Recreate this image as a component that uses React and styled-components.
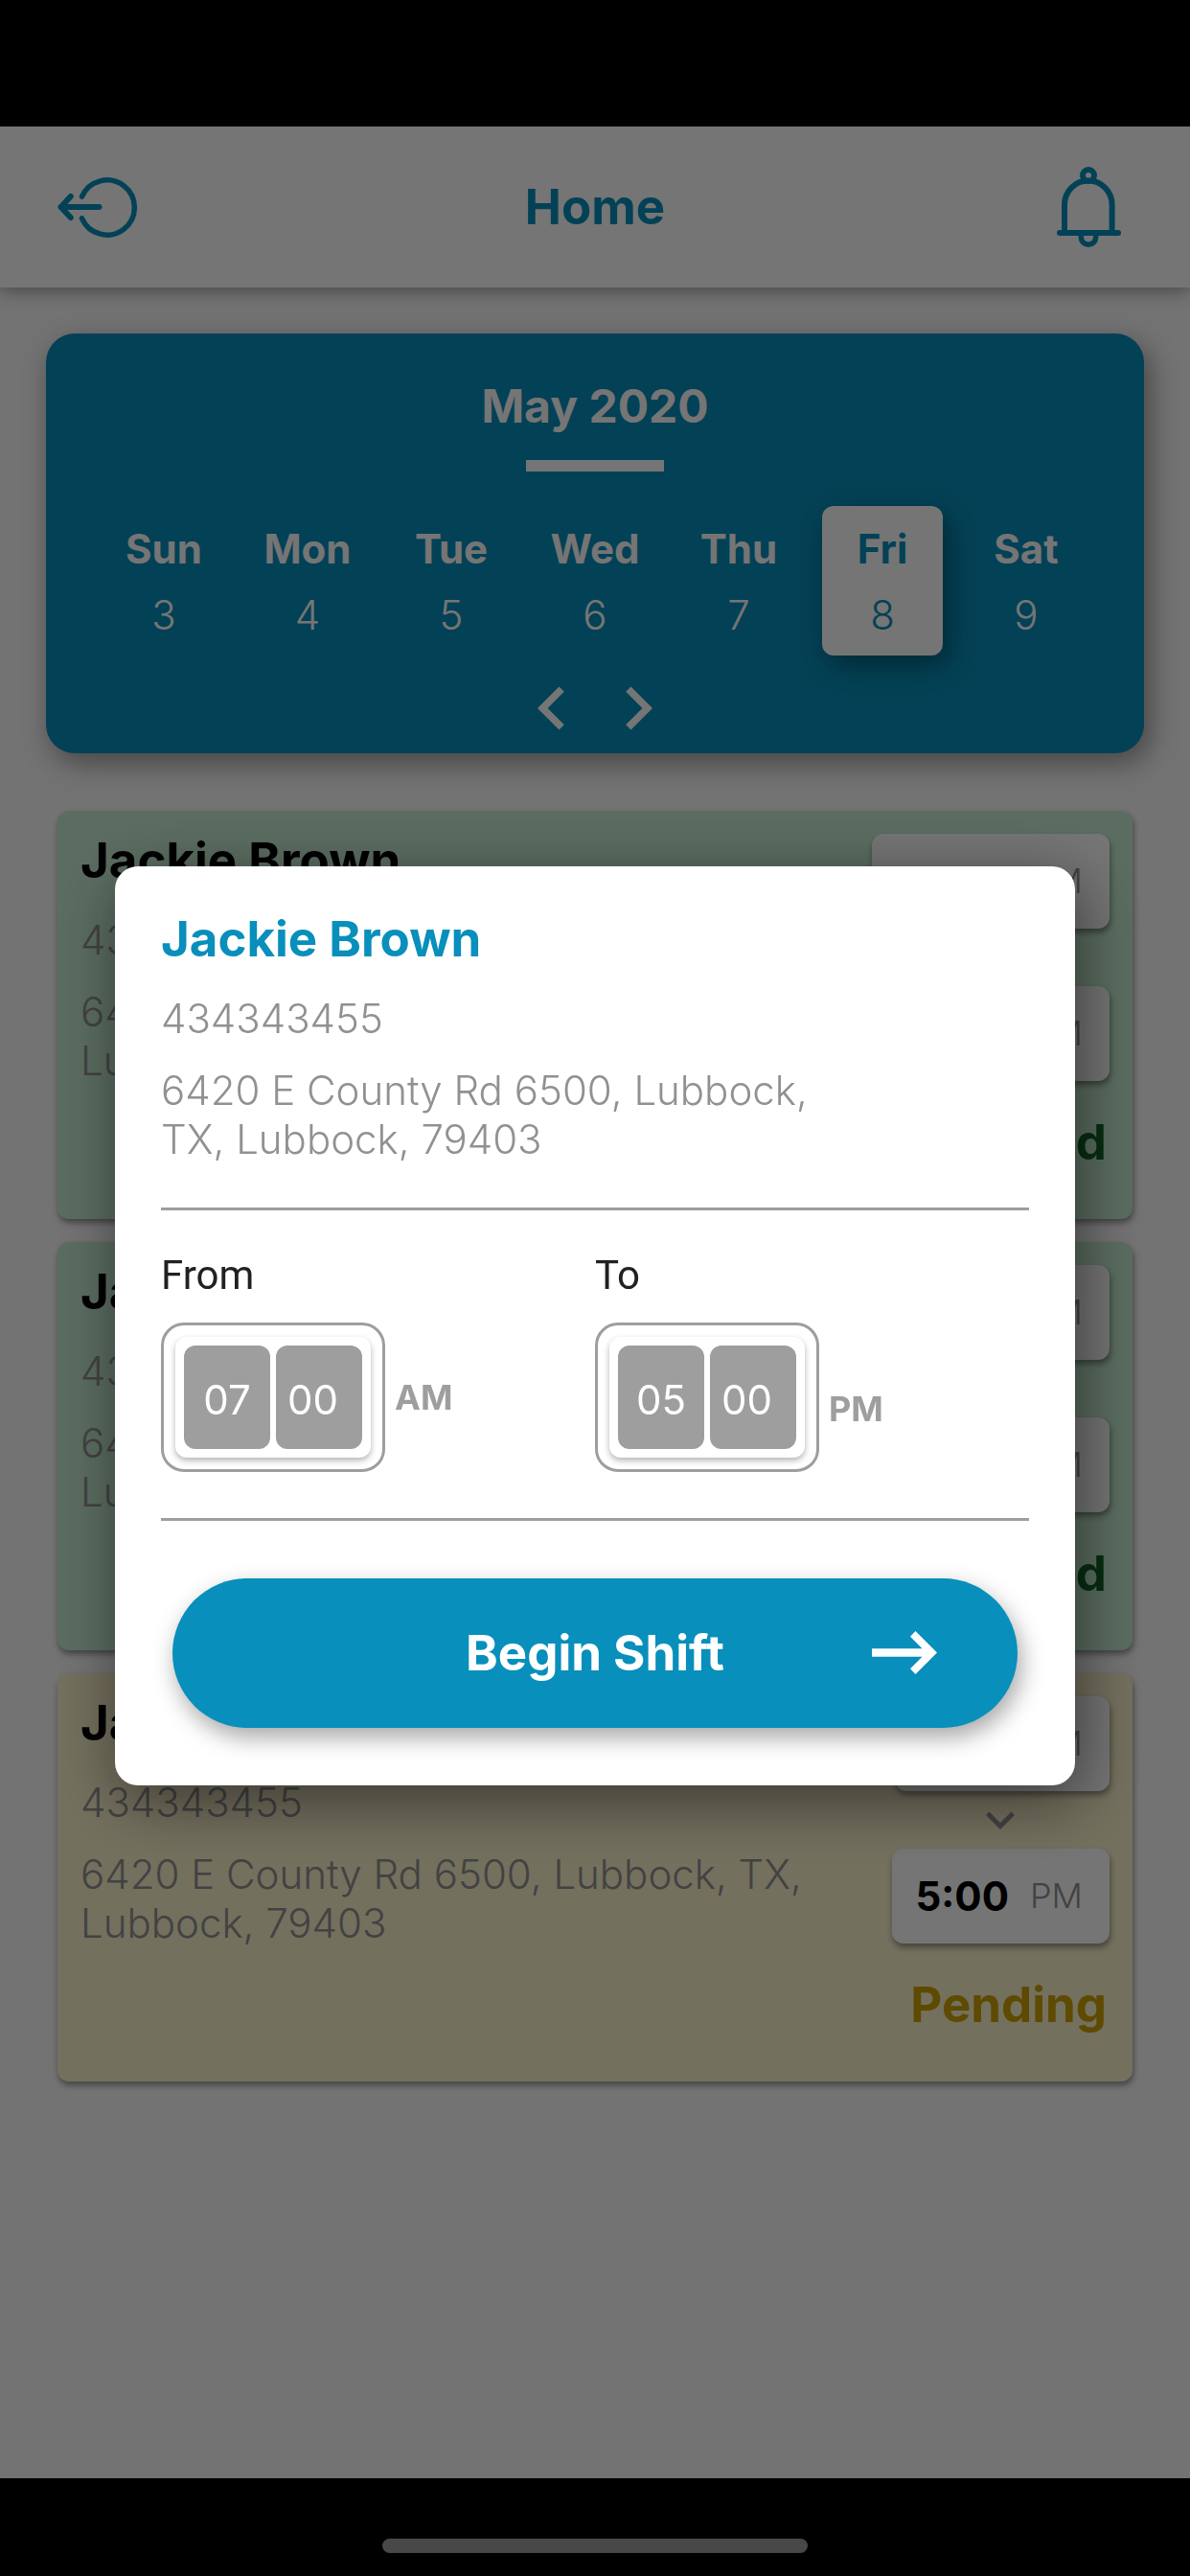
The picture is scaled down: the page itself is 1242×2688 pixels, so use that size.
import React from "react";
import styled, { createGlobalStyle } from "styled-components";
import { MdKeyboardArrowDown, MdKeyboardArrowLeft, MdKeyboardArrowRight } from "react-icons/md";

const blue = "#088fbb";
const grey = "#9e9e9e";

const GlobalStyle = createGlobalStyle`
    * {
        box-sizing: border-box;
    }

    body {
        margin: 0;
        background: #000;
        font-family: Inter, sans-serif;
        font-size: 42px;
        line-height: 51px;
    }

    h1, h2, h3, p {
        margin: 0;
    }

    button {
        border: none;
        background: none;
        padding: 0;
        font: inherit;
        color: inherit;
        cursor: pointer;
    }
`;

const Screen = styled.div`
    min-height: 100vh;
    display: flex;
    flex-direction: column;
`;

const StatusBar = styled.div`
    height: 132px;
    background: #000;
`;

const Header = styled.header`
    position: relative;
    height: 168px;
    padding: 0 60px;
    display: grid;
    grid-template-columns: 1fr auto 1fr;
    align-items: center;
    background: #fff;
    color: ${blue};
    box-shadow: 0 3px 18px rgba(0, 0, 0, 0.4);
`;

const HeaderTitle = styled.h1`
    font-size: 51px;
    line-height: 56px;
    font-weight: 700;
`;

const IconButton = styled.button`
    display: flex;
    justify-self: ${(props) => (props.$end ? "end" : "start")};
    padding: ${(props) => (props.$end ? "0 12px" : "0")};
`;

const Main = styled.main`
    flex: 1;
    padding: 48px;
    background: #fafafa;
`;

const Calendar = styled.section`
    padding: 48px 48px 2px;
    display: flex;
    flex-direction: column;
    align-items: center;
    border-radius: 30px;
    background: ${blue};
    color: #fff;
    box-shadow: 6px 10px 30px rgba(0, 0, 0, 0.4);
`;

const Month = styled.h2`
    font-size: 48px;
    line-height: 56px;
    font-weight: 700;
`;

const MonthBar = styled.div`
    width: 144px;
    height: 12px;
    margin: 28px 0 36px;
    background: #fff;
`;

const Days = styled.div`
    width: 100%;
    display: grid;
    grid-template-columns: repeat(7, 1fr);
    column-gap: 24px;
    padding: 0 12px;
`;

const Day = styled.button`
    && {
        padding: 21px 0 18px;
        display: flex;
        flex-direction: column;
        align-items: center;
        gap: 21px;
        line-height: 48px;
        border-radius: 12px;
        color: ${(props) => (props.$selected ? blue : "#fff")};
        background: ${(props) => (props.$selected ? "#fff" : "transparent")};
        box-shadow: ${(props) => (props.$selected ? "6px 10px 30px rgba(0, 0, 0, 0.4)" : "none")};
    }
`;

const DayName = styled.span`
    font-weight: 700;
`;

const DayNumber = styled.span`
    font-weight: 300;
`;

const Pager = styled.div`
    display: flex;
    margin-top: 10px;
`;

const PagerButton = styled.button`
    display: flex;
    font-size: 90px;
`;

const ShiftList = styled.div`
    padding: 0 12px;
    margin-top: 60px;
    display: flex;
    flex-direction: column;
    gap: 24px;
`;

const Shift = styled.article`
    min-height: 426px;
    padding: 24px;
    display: flex;
    justify-content: space-between;
    border-radius: 12px;
    background: ${(props) => (props.$pending ? "#fbf3cd" : "#c6edd1")};
    box-shadow: 1px 4px 6px rgba(0, 0, 0, 0.4);
`;

const ShiftInfo = styled.div`
    width: 798px;
    flex-shrink: 0;
    color: #919191;
    font-weight: 300;
`;

const Name = styled.h3`
    font-size: 51px;
    line-height: 56px;
    font-weight: 700;
    color: ${(props) => (props.$accent ? blue : "#000")};
`;

const Phone = styled.p`
    margin: 29px 0 24px;
`;

const ShiftTimes = styled.div`
    display: flex;
    flex-direction: column;
    align-items: flex-end;
`;

const TimeChip = styled.div`
    height: 99px;
    padding: 0 28px 0 24px;
    display: flex;
    align-items: center;
    gap: 22px;
    border-radius: 12px;
    background: #fff;
    color: #000;
    white-space: nowrap;
    box-shadow: 1px 4px 6px rgba(0, 0, 0, 0.4);
`;

const Clock = styled.span`
    font-weight: 700;
`;

const ChipMeridiem = styled.span`
    font-size: 36px;
    font-weight: 300;
    color: #919191;
`;

const ChevronBox = styled.div`
    width: 228px;
    height: 60px;
    display: flex;
    justify-content: center;
    font-size: 60px;
    color: #919191;
`;

const Status = styled.p`
    padding: 36px 3px 0 0;
    font-size: 51px;
    line-height: 56px;
    font-weight: 700;
    color: ${(props) => (props.$pending ? "#cca100" : "#116427")};
`;

const BottomBar = styled.footer`
    height: 102px;
    padding-bottom: 24px;
    display: flex;
    align-items: flex-end;
    justify-content: center;
    background: #000;
`;

const HomeIndicator = styled.div`
    width: 444px;
    height: 15px;
    border-radius: 8px;
    background: #9d9d9d;
`;

const Overlay = styled.div`
    position: fixed;
    inset: 0;
    padding: 132px 120px 54px;
    display: flex;
    align-items: center;
    background: rgba(0, 0, 0, 0.54);
`;

const Dialog = styled.div`
    width: 100%;
    padding: 48px 48px 60px;
    border-radius: 24px;
    background: #fff;
    color: #919191;
    font-weight: 300;
    box-shadow: 6px 16px 66px rgba(0, 0, 0, 0.5);
`;

const DialogAddress = styled.p`
    max-width: 720px;
`;

const Times = styled.div`
    margin: 46px 0 60px;
    padding: 42px 0 48px;
    display: grid;
    grid-template-columns: 1fr 1fr;
    border: solid ${grey};
    border-width: 3px 0;
`;

const FieldLabel = styled.p`
    margin-bottom: 24px;
    font-family: Roboto, sans-serif;
    font-weight: 400;
    color: #212121;
`;

const TimeField = styled.div`
    display: flex;
    align-items: center;
    gap: 10px;
`;

const TimeFrame = styled.div`
    padding: 12px;
    border: 3px solid ${grey};
    border-radius: 24px;
`;

const TimeInner = styled.div`
    padding: 9px;
    display: flex;
    gap: 6px;
    border-radius: 12px;
    box-shadow: 0 3px 6px rgba(0, 0, 0, 0.3);
`;

const TimeInput = styled.input`
    width: 90px;
    height: 108px;
    padding: ${(props) => (props.$minutes ? "6px 0 0 12px" : "6px 0 0")};
    border: none;
    border-radius: 12px;
    background: ${grey};
    color: #fff;
    font-family: inherit;
    font-size: 42px;
    font-weight: 400;
    text-align: ${(props) => (props.$minutes ? "left" : "center")};
`;

const Meridiem = styled.span`
    padding-top: ${(props) => (props.$low ? "26px" : "2px")};
    font-size: 36px;
    font-weight: 700;
    color: ${grey};
`;

const BeginButton = styled.button`
    && {
        width: calc(100% - 24px);
        height: 156px;
        margin: 0 12px;
        padding: 0 84px;
        display: grid;
        grid-template-columns: 1fr auto 1fr;
        align-items: center;
        border-radius: 78px;
        background: ${blue};
        color: #fff;
        font-size: 51px;
        font-weight: 700;
        box-shadow: 4px 10px 24px rgba(0, 0, 0, 0.35);
    }
`;

const BeginText = styled.span`
    grid-column: 2;
`;

const ArrowSvg = styled.svg`
    justify-self: end;
`;

const days = [
    { name: "Sun", date: 3 },
    { name: "Mon", date: 4 },
    { name: "Tue", date: 5 },
    { name: "Wed", date: 6 },
    { name: "Thu", date: 7 },
    { name: "Fri", date: 8 },
    { name: "Sat", date: 9 },
];

const shifts = [
    { id: 1, from: "10:00", to: "5:00", status: "Completed" },
    { id: 2, from: "10:00", to: "5:00", status: "Completed" },
    { id: 3, from: "7:00", to: "5:00", status: "Pending" },
];

const LogoutIcon = () => (
    <svg width="84" height="63" viewBox="0 0 84 63" fill="none" stroke="currentColor" strokeWidth="6" strokeLinecap="round" strokeLinejoin="round">
        <path d="M25.5 20.2A28.6 28.6 0 1 1 25.5 42.8" strokeWidth="5.5" />
        <path d="M3.5 31H43.5M13.8 20L3.5 31L13.8 42" />
    </svg>
);

const BellIcon = () => (
    <svg width="67" height="84" viewBox="0 0 67 84" fill="none" stroke="currentColor" strokeWidth="6" strokeLinecap="round">
        <circle cx="33" cy="9" r="6" />
        <path d="M8 68V39.5A24.8 25 0 0 1 57.6 39.5V68" />
        <path d="M3 69H64" />
        <path d="M25.3 72V73.5A7.7 7.7 0 0 0 40.7 73.5V72" strokeWidth="5.5" />
    </svg>
);

const TimePicker = ({ label, hour, minute, meridiem, low }) => (
    <div>
        <FieldLabel>{label}</FieldLabel>
        <TimeField>
            <TimeFrame>
                <TimeInner>
                    <TimeInput aria-label={`${label} hour`} defaultValue={hour} />
                    <TimeInput aria-label={`${label} minutes`} defaultValue={minute} $minutes />
                </TimeInner>
            </TimeFrame>
            <Meridiem $low={low}>{meridiem}</Meridiem>
        </TimeField>
    </div>
);

const ShiftCard = ({ shift }) => {
    const pending = shift.status === "Pending";
    return (
        <Shift $pending={pending}>
            <ShiftInfo>
                <Name>Jackie Brown</Name>
                <Phone>434343455</Phone>
                <p>6420 E County Rd 6500, Lubbock, TX, Lubbock, 79403</p>
            </ShiftInfo>
            <ShiftTimes>
                <TimeChip>
                    <Clock>{shift.from}</Clock>
                    <ChipMeridiem>AM</ChipMeridiem>
                </TimeChip>
                <ChevronBox>
                    <MdKeyboardArrowDown />
                </ChevronBox>
                <TimeChip>
                    <Clock>{shift.to}</Clock>
                    <ChipMeridiem>PM</ChipMeridiem>
                </TimeChip>
                <Status $pending={pending}>{shift.status}</Status>
            </ShiftTimes>
        </Shift>
    );
};

const App = () => {
    return (
        <>
            <GlobalStyle />
            <Screen>
                <StatusBar />
                <Header>
                    <IconButton aria-label="Log out">
                        <LogoutIcon />
                    </IconButton>
                    <HeaderTitle>Home</HeaderTitle>
                    <IconButton aria-label="Notifications" $end>
                        <BellIcon />
                    </IconButton>
                </Header>
                <Main>
                    <Calendar>
                        <Month>May 2020</Month>
                        <MonthBar />
                        <Days>
                            {days.map((day) => (
                                <Day key={day.date} $selected={day.date === 8}>
                                    <DayName>{day.name}</DayName>
                                    <DayNumber>{day.date}</DayNumber>
                                </Day>
                            ))}
                        </Days>
                        <Pager>
                            <PagerButton aria-label="Previous week">
                                <MdKeyboardArrowLeft />
                            </PagerButton>
                            <PagerButton aria-label="Next week">
                                <MdKeyboardArrowRight />
                            </PagerButton>
                        </Pager>
                    </Calendar>
                    <ShiftList>
                        {shifts.map((shift) => (
                            <ShiftCard shift={shift} key={shift.id} />
                        ))}
                    </ShiftList>
                </Main>
                <BottomBar>
                    <HomeIndicator />
                </BottomBar>
            </Screen>
            <Overlay>
                <Dialog role="dialog" aria-label="Begin shift">
                    <Name $accent>Jackie Brown</Name>
                    <Phone>434343455</Phone>
                    <DialogAddress>6420 E County Rd 6500, Lubbock, TX, Lubbock, 79403</DialogAddress>
                    <Times>
                        <TimePicker label="From" hour="07" minute="00" meridiem="AM" />
                        <TimePicker label="To" hour="05" minute="00" meridiem="PM" low />
                    </Times>
                    <BeginButton>
                        <BeginText>Begin Shift</BeginText>
                        <ArrowSvg width="68" height="45" viewBox="0 0 68 45" fill="currentColor">
                            <path d="M45.5 0L68 22.5L45.5 45L40 39.2L52.5 26.7H0V18.3H52.5L40 5.8Z" />
                        </ArrowSvg>
                    </BeginButton>
                </Dialog>
            </Overlay>
        </>
    );
};

export default App;
